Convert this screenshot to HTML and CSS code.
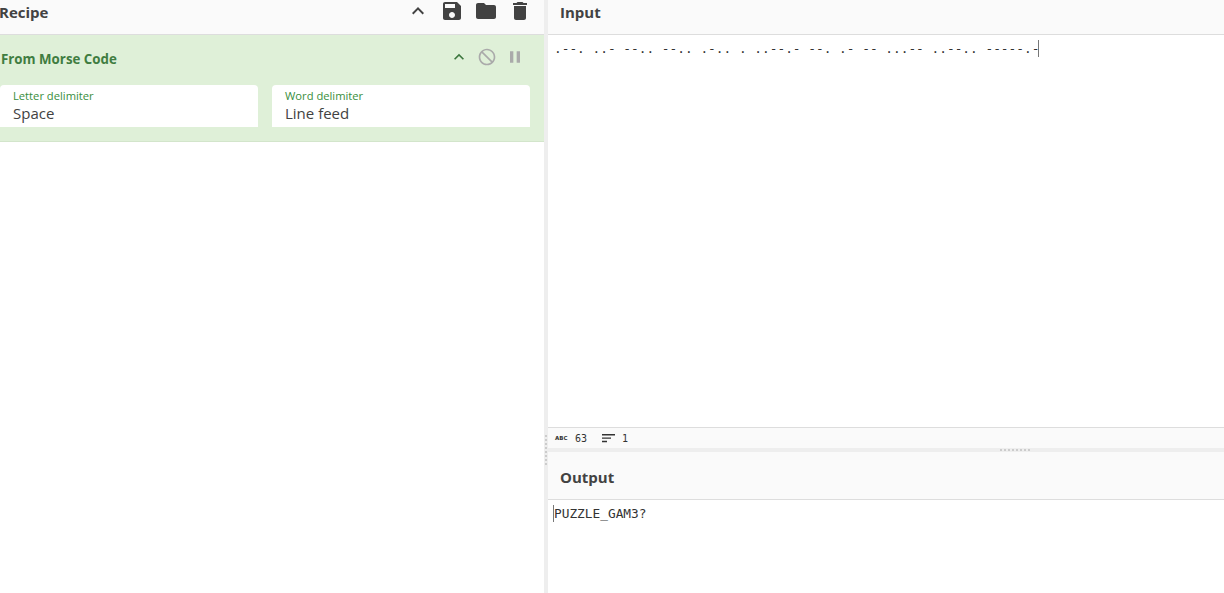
FILE: index.html
```html
<!DOCTYPE html>
<html lang="en">
<head>
<meta charset="utf-8">
<title>CyberChef</title>
<link rel="stylesheet" href="styles.css">
</head>
<body>
<div class="app">
  <section class="recipe">
    <header class="head recipe-head">
      <h2 class="title recipe-title">Recipe</h2>
      <div class="tools">
        <svg class="tool" viewBox="0 0 24 24"><path d="M12 8l-6 6 1.41 1.41L12 10.83l4.59 4.58L18 14z"/></svg>
        <svg class="tool" viewBox="0 0 24 24"><path d="M17 3H5c-1.11 0-2 .9-2 2v14c0 1.1.89 2 2 2h14c1.1 0 2-.9 2-2V7l-4-4zm-5 16c-1.66 0-3-1.34-3-3s1.34-3 3-3 3 1.34 3 3-1.34 3-3 3zm3-10H5V5h10v4z"/></svg>
        <svg class="tool" viewBox="0 0 24 24"><path d="M10 4H4c-1.1 0-1.99.9-1.99 2L2 18c0 1.1.9 2 2 2h16c1.1 0 2-.9 2-2V8c0-1.1-.9-2-2-2h-8l-2-2z"/></svg>
        <svg class="tool" viewBox="0 0 24 24"><path d="M6 19c0 1.1.9 2 2 2h8c1.1 0 2-.9 2-2V7H6v12zM19 4h-3.5l-1-1h-5l-1 1H5v2h14V4z"/></svg>
      </div>
    </header>
    <div class="op">
      <div class="op-top">
        <span class="op-name">From Morse Code</span>
        <div class="op-tools">
          <svg class="op-icon op-up" viewBox="0 0 24 24"><path d="M12 8l-6 6 1.41 1.41L12 10.83l4.59 4.58L18 14z"/></svg>
          <svg class="op-icon op-block" viewBox="0 0 24 24"><path d="M12 2C6.48 2 2 6.48 2 12s4.48 10 10 10 10-4.48 10-10S17.52 2 12 2zM4 12c0-4.42 3.58-8 8-8 1.85 0 3.55.63 4.9 1.69L5.69 16.9C4.63 15.55 4 13.85 4 12zm8 8c-1.85 0-3.55-.63-4.9-1.69L18.31 7.1C19.37 8.45 20 10.15 20 12c0 4.42-3.58 8-8 8z"/></svg>
          <svg class="op-icon" viewBox="0 0 24 24"><path d="M6 19h4V5H6v14zm8-14v14h4V5h-4z"/></svg>
        </div>
      </div>
      <div class="args">
        <div class="arg"><span class="arg-label">Letter delimiter</span><span class="arg-value">Space</span></div>
        <div class="arg"><span class="arg-label">Word delimiter</span><span class="arg-value">Line feed</span></div>
      </div>
    </div>
  </section>
  <div class="v-gutter"><span class="v-grip"></span></div>
  <section class="io">
    <header class="head input-head"><h2 class="title">Input</h2></header>
    <div class="editor input-editor"><span class="mono">.--. ..- --.. --.. .-.. . ..--.- --. .- -- ...-- ..--.. -----.-</span><span class="caret"></span></div>
    <div class="status">
      <span class="abc">ABC</span><span class="stat">63</span>
      <svg class="lines" viewBox="0 0 13 9"><path d="M0 0h13v1.4H0zM0 3.4h9v1.4H0zM0 6.8h5v1.4H0z"/></svg><span class="stat">1</span>
    </div>
    <div class="h-gutter"><span class="h-grip"></span></div>
    <header class="head output-head"><h2 class="title">Output</h2></header>
    <div class="editor output-editor"><span class="caret"></span><span class="mono">PUZZLE_GAM3?</span></div>
  </section>
</div>
</body>
</html>
```
FILE: styles.css
```css
* { box-sizing: border-box; }
html, body { margin: 0; height: 100%; overflow: hidden; background: #fff; }
body { font-family: "Open Sans", "Liberation Sans", sans-serif; color: #333; }
.app { display: grid; grid-template-columns: 544px 4px 1fr; height: 593px; }

.head { background: #fafafa; border-bottom: 1px solid #ddd; display: flex; }
.title { margin: 0; font-size: 15px; line-height: 20px; font-weight: 700; color: #424242; }

.recipe-head { height: 35px; justify-content: space-between; padding-top: 2px; }
.recipe-title { margin-left: -1px; }
.tools { display: flex; gap: 10px; margin: -3px 12px 0 0; height: 24px; }
.tool { width: 24px; height: 24px; fill: #424242; }

.op { height: 107px; background: #dff0d8; border-bottom: 1px solid #d3e5cb; }
.op-top { display: flex; justify-content: space-between; height: 50px; padding: 14px 19px 0 1px; }
.op-name { font-size: 13.3px; line-height: 20px; font-weight: 700; color: #3f7d41; }
.op-tools { display: flex; gap: 8px; margin-top: -2px; height: 20px; }
.op-icon { width: 20px; height: 20px; fill: #aaa; }
.op-up { fill: #3c763d; }
.op-block { transform: scaleX(-1); }
.args { display: flex; gap: 14px; padding-right: 14px; }
.arg { flex: 1; height: 42px; background: #fff; border-radius: 4px 4px 0 0; padding: 3px 13px 0; display: flex; flex-direction: column; }
.arg-label { font-size: 11.2px; line-height: 15px; color: #388e3c; }
.arg-value { font-size: 15px; line-height: 20px; color: #424242; }

.v-gutter { background: #eee; display: flex; align-items: flex-end; justify-content: center; padding-bottom: 128px; }
.v-grip { width: 2px; height: 30px; background: repeating-linear-gradient(#ccc 0 2px, transparent 2px 4px); }

.io { display: grid; grid-template-rows: 35px 392px 21px 4px 48px 1fr; min-width: 0; }
.input-head, .output-head { padding-left: 12px; align-items: flex-start; }
.input-head { padding-top: 2px; }
.output-head { padding-top: 15px; }
.editor { padding: 4px 6px 0; display: flex; align-items: flex-start; font-size: 0; }
.mono { font-family: "DejaVu Sans Mono", "Liberation Mono", monospace; font-size: 12.8px; line-height: 19px; color: #333; white-space: pre; }
.caret { width: 1px; height: 17px; margin-top: 1px; background: #777; flex: none; }
.input-editor .caret { margin-left: -1px; }
.output-editor { padding-left: 5px; }

.status { background: #fafafa; border-top: 1px solid #ddd; display: flex; align-items: center; padding-left: 7px; }
.abc { width: 13px; font-family: "DejaVu Sans", sans-serif; font-size: 5.5px; font-weight: 700; color: #333; margin-right: 7px; }
.stat { font-family: "DejaVu Sans Mono", monospace; font-size: 10px; color: #333; }
.lines { width: 13px; height: 9px; fill: #333; margin: 0 7px 0 15px; }
.h-gutter { background: #eee; display: flex; align-items: center; padding-left: 452px; }
.h-grip { width: 30px; height: 2px; background: repeating-linear-gradient(90deg, #ccc 0 2px, transparent 2px 4px); }
```
